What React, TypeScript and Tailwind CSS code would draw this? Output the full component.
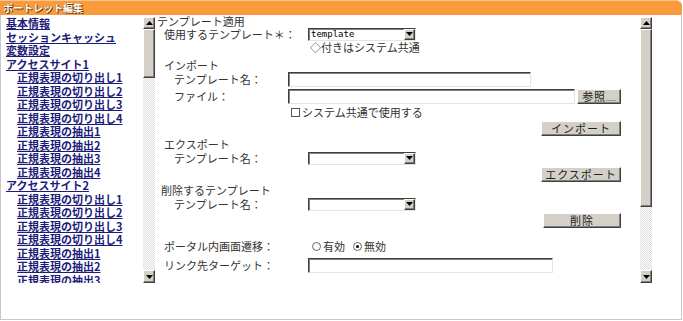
import React from 'react';

const navItems: { label: string; sub?: boolean }[] = [
  { label: '基本情報' },
  { label: 'セッションキャッシュ' },
  { label: '変数設定' },
  { label: 'アクセスサイト1' },
  { label: '正規表現の切り出し1', sub: true },
  { label: '正規表現の切り出し2', sub: true },
  { label: '正規表現の切り出し3', sub: true },
  { label: '正規表現の切り出し4', sub: true },
  { label: '正規表現の抽出1', sub: true },
  { label: '正規表現の抽出2', sub: true },
  { label: '正規表現の抽出3', sub: true },
  { label: '正規表現の抽出4', sub: true },
  { label: 'アクセスサイト2' },
  { label: '正規表現の切り出し1', sub: true },
  { label: '正規表現の切り出し2', sub: true },
  { label: '正規表現の切り出し3', sub: true },
  { label: '正規表現の切り出し4', sub: true },
  { label: '正規表現の抽出1', sub: true },
  { label: '正規表現の抽出2', sub: true },
  { label: '正規表現の抽出3', sub: true },
  { label: '正規表現の抽出4', sub: true },
];

const Arrow = ({ up }: { up?: boolean }) => (
  <svg width="7" height="4" viewBox="0 0 7 4" className="block">
    {up ? <polygon points="3.5,0 7,4 0,4" fill="#000" /> : <polygon points="0,0 7,0 3.5,4" fill="#000" />}
  </svg>
);

// classic raised 3d box
const raised = 'bg-[#d4d0c8] border border-t-white border-l-white border-r-[#404040] border-b-[#404040] shadow-[inset_-1px_-1px_0_#808080]';

const ScrollBar = ({ thumb }: { thumb: number }) => (
  <div className="w-[12px] h-[266px] mt-[2px] flex flex-col bg-[repeating-conic-gradient(#dcdcdc_0_25%,#ffffff_0_50%)] bg-[length:2px_2px]">
    <div className={`${raised} h-[12px] flex items-center justify-center`}>
      <Arrow up />
    </div>
    <div className={raised} style={{ height: thumb }} />
    <div className="flex-1" />
    <div className={`${raised} h-[13px] flex items-center justify-center`}>
      <Arrow />
    </div>
  </div>
);

const sunken = 'bg-white border border-t-[#404040] border-l-[#404040] border-r-[#e4e4e4] border-b-[#e4e4e4] shadow-[inset_1px_1px_0_#808080]';

const Select = ({ value }: { value?: string }) => (
  <div className={`${sunken} w-[108px] h-[13px] flex items-center`}>
    <span className="flex-1 pl-[2px] text-[9px] leading-none font-['DejaVu_Sans_Mono',monospace] text-black">{value}</span>
    <div className={`${raised} w-[11px] h-[11px] flex items-center justify-center`}>
      <Arrow />
    </div>
  </div>
);

const Button = ({ children, w }: { children: React.ReactNode; w: string }) => (
  <div className={`${raised} ${w} h-[15px] flex items-center justify-center text-[11px] leading-none tracking-[1px] text-[#222]`}>
    {children}
  </div>
);

export default function App() {
  return (
    <div className="w-[683px] h-[321px] bg-white font-['Noto_Sans_CJK_JP',sans-serif] text-[11px] text-[#333]">
      <div className="w-[682px] h-[320px] border-l border-r border-b border-[#c8c8c8] rounded-tr-[6px] flex flex-col">
        {/* header */}
        <div className="h-[15px] bg-[#f99a3c] border-t border-[#fcc58e] rounded-tr-[6px] -mx-px px-[3px] flex items-center">
          <span className="text-[10px] font-bold leading-none text-white [text-shadow:0_0_1px_#5a2a00,1px_1px_0_#7a3a00]">ポートレット編集</span>
        </div>

        <div className="flex h-[270px]">
          {/* navigation */}
          <div className="w-[142px] h-[268px] overflow-hidden pt-[2px]">
            {navItems.map((item, i) => (
              <div
                key={i}
                className={`${item.sub ? 'pl-[16px]' : 'pl-[5px]'} leading-[13.5px] text-[11px] font-bold text-[#1c1c7a] whitespace-nowrap`}
              >
                <span className="underline underline-offset-[1px]">{item.label}</span>
              </div>
            ))}
          </div>
          <ScrollBar thumb={49} />

          {/* main form */}
          <div className="w-[485px] h-[268px] overflow-hidden pl-[2px] leading-none">
            <div className="h-[12px] flex items-center">テンプレート適用</div>
            <div className="h-[14px] flex items-center">
              <div className="w-[151px] pl-[7px]">使用するテンプレート＊：</div>
              <Select value="template" />
            </div>
            <div className="h-[12px] flex items-center pl-[153px]">◇付きはシステム共通</div>
            <div className="h-[6px]" />

            <div className="h-[12px] flex items-center pl-[7px]">インポート</div>
            <div className="h-[16px] flex items-center">
              <div className="w-[131px] pl-[17px]">テンプレート名：</div>
              <div className={`${sunken} w-[243px] h-[15px]`} />
            </div>
            <div className="h-[18px] flex items-center">
              <div className="w-[131px] pl-[17px]">ファイル：</div>
              <div className={`${sunken} w-[287px] h-[15px]`} />
              <div className="ml-[2px]">
                <Button w="w-[44px]">
                  参照<span className="text-[5px] tracking-normal self-end mb-[2px]">.......</span>
                </Button>
              </div>
            </div>
            <div className="h-[14px] flex items-center pl-[134px]">
              <span className="w-[9px] h-[9px] border border-[#555] bg-white mr-[2px]" />
              システム共通で使用する
            </div>
            <div className="h-[18px] flex items-center justify-end pr-[19px]">
              <Button w="w-[80px]">インポート</Button>
            </div>

            <div className="h-[14px] flex items-center pl-[7px]">エクスポート</div>
            <div className="h-[14px] flex items-center">
              <div className="w-[151px] pl-[17px]">テンプレート名：</div>
              <Select />
            </div>
            <div className="h-[19px] flex items-center justify-end pr-[19px]">
              <Button w="w-[80px]">エクスポート</Button>
            </div>

            <div className="h-[13px] flex items-center pl-[4px]">削除するテンプレート</div>
            <div className="h-[14px] flex items-center">
              <div className="w-[151px] pl-[17px]">テンプレート名：</div>
              <Select />
            </div>
            <div className="h-[18px] flex items-center justify-end pr-[19px]">
              <Button w="w-[78px]">削除</Button>
            </div>
            <div className="h-[10px]" />

            <div className="h-[14px] flex items-center">
              <div className="w-[155px] pl-[7px]">ポータル内画面遷移：</div>
              <span className="w-[9px] h-[9px] rounded-full border border-[#666] bg-white mr-[2px]" />
              <span>有効</span>
              <span className="w-[9px] h-[9px] rounded-full border border-[#666] bg-white ml-[8px] mr-[2px] flex items-center justify-center">
                <span className="w-[3px] h-[3px] rounded-full bg-black" />
              </span>
              <span>無効</span>
            </div>
            <div className="h-[4px]" />
            <div className="h-[16px] flex items-center">
              <div className="w-[151px] pl-[7px]">リンク先ターゲット：</div>
              <div className={`${sunken} w-[245px] h-[15px]`} />
            </div>
          </div>
          <ScrollBar thumb={178} />
          <div className="flex-1" />
        </div>
      </div>
    </div>
  );
}
